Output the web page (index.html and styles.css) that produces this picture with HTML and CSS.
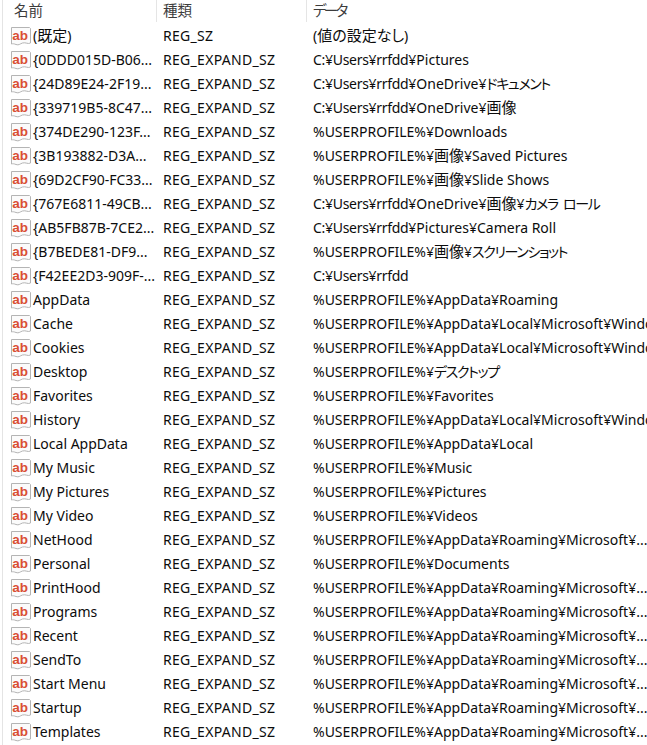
FILE: index.html
```html
<!DOCTYPE html>
<html lang="ja">
<head>
<meta charset="utf-8">
<title>Registry</title>
<link rel="stylesheet" href="styles.css">
</head>
<body>
<svg class="defs" width="0" height="0" aria-hidden="true">
<symbol id="pg" viewBox="0 0 20 20">
<path d="M.5 1.5H18.5L19.5 2.5V17C17 18.5 14.5 16 11.5 17C8.5 18 8 19.5 5 18.5C3 17.8 2 17.5 .5 18Z" fill="#fbfbfb" stroke="#b4b4b4"/>
</symbol>
</svg>
<div class="list">
<div class="head"><div class="hc h1">名前</div><div class="hc h2">種類</div><div class="hc h3"><span class="hk">データ</span></div></div>
<div class="row"><div class="n"><svg class="i" viewBox="0 0 20 20"><use href="#pg"/><text x="9.2" y="13.5" class="ab">ab</text></svg><span>(<span class="j">既定</span>)</span></div><div class="t">REG_SZ</div><div class="d">(<span class="j">値の設定なし</span>)</div></div>
<div class="row"><div class="n"><svg class="i" viewBox="0 0 20 20"><use href="#pg"/><text x="9.2" y="13.5" class="ab">ab</text></svg><span>{0DDD015D-B06...</span></div><div class="t">REG_EXPAND_SZ</div><div class="d"><span class="c">C:¥Users¥rrfdd</span>¥Pictures</div></div>
<div class="row"><div class="n"><svg class="i" viewBox="0 0 20 20"><use href="#pg"/><text x="9.2" y="13.5" class="ab">ab</text></svg><span>{24D89E24-2F19...</span></div><div class="t">REG_EXPAND_SZ</div><div class="d"><span class="c">C:¥Users¥rrfdd</span>¥OneDrive¥<span class="k">ドキュメント</span></div></div>
<div class="row"><div class="n"><svg class="i" viewBox="0 0 20 20"><use href="#pg"/><text x="9.2" y="13.5" class="ab">ab</text></svg><span>{339719B5-8C47...</span></div><div class="t">REG_EXPAND_SZ</div><div class="d"><span class="c">C:¥Users¥rrfdd</span>¥OneDrive¥<span class="j">画像</span></div></div>
<div class="row"><div class="n"><svg class="i" viewBox="0 0 20 20"><use href="#pg"/><text x="9.2" y="13.5" class="ab">ab</text></svg><span>{374DE290-123F...</span></div><div class="t">REG_EXPAND_SZ</div><div class="d">%USERPROFILE%¥Downloads</div></div>
<div class="row"><div class="n"><svg class="i" viewBox="0 0 20 20"><use href="#pg"/><text x="9.2" y="13.5" class="ab">ab</text></svg><span>{3B193882-D3A...</span></div><div class="t">REG_EXPAND_SZ</div><div class="d">%USERPROFILE%¥<span class="j">画像</span>¥Saved Pictures</div></div>
<div class="row"><div class="n"><svg class="i" viewBox="0 0 20 20"><use href="#pg"/><text x="9.2" y="13.5" class="ab">ab</text></svg><span>{69D2CF90-FC33...</span></div><div class="t">REG_EXPAND_SZ</div><div class="d">%USERPROFILE%¥<span class="j">画像</span>¥Slide Shows</div></div>
<div class="row"><div class="n"><svg class="i" viewBox="0 0 20 20"><use href="#pg"/><text x="9.2" y="13.5" class="ab">ab</text></svg><span>{767E6811-49CB...</span></div><div class="t">REG_EXPAND_SZ</div><div class="d"><span class="c">C:¥Users¥rrfdd</span>¥OneDrive¥<span class="j">画像</span>¥<span class="k">カメラ ロール</span></div></div>
<div class="row"><div class="n"><svg class="i" viewBox="0 0 20 20"><use href="#pg"/><text x="9.2" y="13.5" class="ab">ab</text></svg><span>{AB5FB87B-7CE2...</span></div><div class="t">REG_EXPAND_SZ</div><div class="d"><span class="c">C:¥Users¥rrfdd</span>¥Pictures¥Camera Roll</div></div>
<div class="row"><div class="n"><svg class="i" viewBox="0 0 20 20"><use href="#pg"/><text x="9.2" y="13.5" class="ab">ab</text></svg><span>{B7BEDE81-DF9...</span></div><div class="t">REG_EXPAND_SZ</div><div class="d">%USERPROFILE%¥<span class="j">画像</span>¥<span class="k">スクリーンショット</span></div></div>
<div class="row"><div class="n"><svg class="i" viewBox="0 0 20 20"><use href="#pg"/><text x="9.2" y="13.5" class="ab">ab</text></svg><span>{F42EE2D3-909F-...</span></div><div class="t">REG_EXPAND_SZ</div><div class="d"><span class="c">C:¥Users¥rrfdd</span></div></div>
<div class="row"><div class="n"><svg class="i" viewBox="0 0 20 20"><use href="#pg"/><text x="9.2" y="13.5" class="ab">ab</text></svg><span>AppData</span></div><div class="t">REG_EXPAND_SZ</div><div class="d">%USERPROFILE%¥AppData¥Roaming</div></div>
<div class="row"><div class="n"><svg class="i" viewBox="0 0 20 20"><use href="#pg"/><text x="9.2" y="13.5" class="ab">ab</text></svg><span>Cache</span></div><div class="t">REG_EXPAND_SZ</div><div class="d">%USERPROFILE%¥AppData¥Local¥Microsoft¥Windows</div></div>
<div class="row"><div class="n"><svg class="i" viewBox="0 0 20 20"><use href="#pg"/><text x="9.2" y="13.5" class="ab">ab</text></svg><span>Cookies</span></div><div class="t">REG_EXPAND_SZ</div><div class="d">%USERPROFILE%¥AppData¥Local¥Microsoft¥Windows</div></div>
<div class="row"><div class="n"><svg class="i" viewBox="0 0 20 20"><use href="#pg"/><text x="9.2" y="13.5" class="ab">ab</text></svg><span>Desktop</span></div><div class="t">REG_EXPAND_SZ</div><div class="d">%USERPROFILE%¥<span class="k">デスクトップ</span></div></div>
<div class="row"><div class="n"><svg class="i" viewBox="0 0 20 20"><use href="#pg"/><text x="9.2" y="13.5" class="ab">ab</text></svg><span>Favorites</span></div><div class="t">REG_EXPAND_SZ</div><div class="d">%USERPROFILE%¥Favorites</div></div>
<div class="row"><div class="n"><svg class="i" viewBox="0 0 20 20"><use href="#pg"/><text x="9.2" y="13.5" class="ab">ab</text></svg><span>History</span></div><div class="t">REG_EXPAND_SZ</div><div class="d">%USERPROFILE%¥AppData¥Local¥Microsoft¥Windows</div></div>
<div class="row"><div class="n"><svg class="i" viewBox="0 0 20 20"><use href="#pg"/><text x="9.2" y="13.5" class="ab">ab</text></svg><span>Local AppData</span></div><div class="t">REG_EXPAND_SZ</div><div class="d">%USERPROFILE%¥AppData¥Local</div></div>
<div class="row"><div class="n"><svg class="i" viewBox="0 0 20 20"><use href="#pg"/><text x="9.2" y="13.5" class="ab">ab</text></svg><span>My Music</span></div><div class="t">REG_EXPAND_SZ</div><div class="d">%USERPROFILE%¥Music</div></div>
<div class="row"><div class="n"><svg class="i" viewBox="0 0 20 20"><use href="#pg"/><text x="9.2" y="13.5" class="ab">ab</text></svg><span>My Pictures</span></div><div class="t">REG_EXPAND_SZ</div><div class="d">%USERPROFILE%¥Pictures</div></div>
<div class="row"><div class="n"><svg class="i" viewBox="0 0 20 20"><use href="#pg"/><text x="9.2" y="13.5" class="ab">ab</text></svg><span>My Video</span></div><div class="t">REG_EXPAND_SZ</div><div class="d">%USERPROFILE%¥Videos</div></div>
<div class="row"><div class="n"><svg class="i" viewBox="0 0 20 20"><use href="#pg"/><text x="9.2" y="13.5" class="ab">ab</text></svg><span>NetHood</span></div><div class="t">REG_EXPAND_SZ</div><div class="d">%USERPROFILE%¥AppData¥Roaming¥Microsoft¥...</div></div>
<div class="row"><div class="n"><svg class="i" viewBox="0 0 20 20"><use href="#pg"/><text x="9.2" y="13.5" class="ab">ab</text></svg><span>Personal</span></div><div class="t">REG_EXPAND_SZ</div><div class="d">%USERPROFILE%¥Documents</div></div>
<div class="row"><div class="n"><svg class="i" viewBox="0 0 20 20"><use href="#pg"/><text x="9.2" y="13.5" class="ab">ab</text></svg><span>PrintHood</span></div><div class="t">REG_EXPAND_SZ</div><div class="d">%USERPROFILE%¥AppData¥Roaming¥Microsoft¥...</div></div>
<div class="row"><div class="n"><svg class="i" viewBox="0 0 20 20"><use href="#pg"/><text x="9.2" y="13.5" class="ab">ab</text></svg><span>Programs</span></div><div class="t">REG_EXPAND_SZ</div><div class="d">%USERPROFILE%¥AppData¥Roaming¥Microsoft¥...</div></div>
<div class="row"><div class="n"><svg class="i" viewBox="0 0 20 20"><use href="#pg"/><text x="9.2" y="13.5" class="ab">ab</text></svg><span>Recent</span></div><div class="t">REG_EXPAND_SZ</div><div class="d">%USERPROFILE%¥AppData¥Roaming¥Microsoft¥...</div></div>
<div class="row"><div class="n"><svg class="i" viewBox="0 0 20 20"><use href="#pg"/><text x="9.2" y="13.5" class="ab">ab</text></svg><span>SendTo</span></div><div class="t">REG_EXPAND_SZ</div><div class="d">%USERPROFILE%¥AppData¥Roaming¥Microsoft¥...</div></div>
<div class="row"><div class="n"><svg class="i" viewBox="0 0 20 20"><use href="#pg"/><text x="9.2" y="13.5" class="ab">ab</text></svg><span>Start Menu</span></div><div class="t">REG_EXPAND_SZ</div><div class="d">%USERPROFILE%¥AppData¥Roaming¥Microsoft¥...</div></div>
<div class="row"><div class="n"><svg class="i" viewBox="0 0 20 20"><use href="#pg"/><text x="9.2" y="13.5" class="ab">ab</text></svg><span>Startup</span></div><div class="t">REG_EXPAND_SZ</div><div class="d">%USERPROFILE%¥AppData¥Roaming¥Microsoft¥...</div></div>
<div class="row"><div class="n"><svg class="i" viewBox="0 0 20 20"><use href="#pg"/><text x="9.2" y="13.5" class="ab">ab</text></svg><span>Templates</span></div><div class="t">REG_EXPAND_SZ</div><div class="d">%USERPROFILE%¥AppData¥Roaming¥Microsoft¥...</div></div>
</div>
</body>
</html>
```
FILE: styles.css
```css
html, body { margin: 0; padding: 0; height: 100%; overflow: hidden; background: #fff; }
body { font-family: "Noto Sans", "Noto Sans CJK JP", sans-serif; font-size: 14px; color: #0c0c0c; font-feature-settings: "palt"; }
.defs { display: block; height: 0; }
.list { width: 645px; height: 745px; overflow: hidden; box-sizing: border-box; margin-left: 2px; border-left: 1px solid #e4e4e4; }
.head, .row { display: grid; grid-template-columns: 153px 150px 1fr; white-space: nowrap; }
.head { height: 23px; align-items: start; }
.hc { height: 22px; line-height: 20px; box-sizing: border-box; color: #3c3c3c; font-size: 14.5px; }
.h1 { padding-left: 11px; }
.h2, .h3 { padding-left: 6px; border-left: 1px solid #e5e5e5; }
.hk { letter-spacing: -2.6px; }
.row { height: 24px; line-height: 24px; align-items: start; }
.n, .t, .d { padding-top: 1px; }
.n { display: flex; align-items: center; gap: 2px; padding-left: 8px; overflow: hidden; }
.t { padding-left: 7px; letter-spacing: 0.3px; }
.d { padding-left: 7px; overflow: hidden; }
.c { letter-spacing: -0.3px; }
.j { font-size: 15px; line-height: 0; }
.k { font-size: 14px; line-height: 0; letter-spacing: -1.35px; word-spacing: 3px; }
.i { width: 20px; height: 20px; flex: none; margin-top: -1px; }
.ab { font-family: "Liberation Sans", sans-serif; font-size: 13.5px; font-weight: 700; fill: #d94f33; text-anchor: middle; }
```
